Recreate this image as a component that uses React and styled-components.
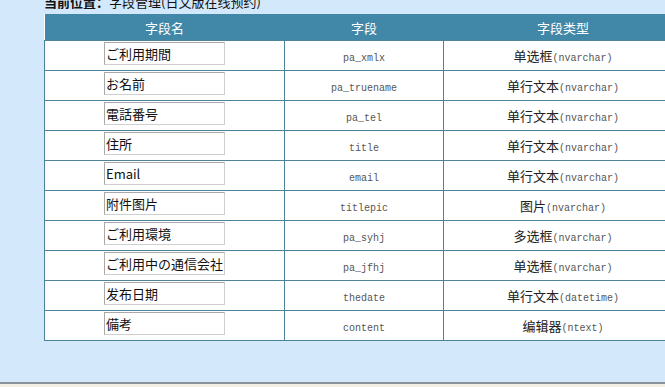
import React from "react";
import styled, { createGlobalStyle } from "styled-components";

const GlobalStyle = createGlobalStyle`
  html, body {
    margin: 0;
    padding: 0;
    background: #d3e8fb;
    overflow: hidden;
  }
`;

const fields = [
  { name: "ご利用期間", field: "pa_xmlx", type: "单选框", db: "nvarchar" },
  { name: "お名前", field: "pa_truename", type: "单行文本", db: "nvarchar" },
  { name: "電話番号", field: "pa_tel", type: "单行文本", db: "nvarchar" },
  { name: "住所", field: "title", type: "单行文本", db: "nvarchar" },
  { name: "Email", field: "email", type: "单行文本", db: "nvarchar" },
  { name: "附件图片", field: "titlepic", type: "图片", db: "nvarchar" },
  { name: "ご利用環境", field: "pa_syhj", type: "多选框", db: "nvarchar" },
  { name: "ご利用中の通信会社", field: "pa_jfhj", type: "单选框", db: "nvarchar" },
  { name: "发布日期", field: "thedate", type: "单行文本", db: "datetime" },
  { name: "備考", field: "content", type: "编辑器", db: "ntext" },
];

const Page = styled.div`
  width: 665px;
  height: 387px;
  display: flex;
  flex-direction: column;
  font-family: "Noto Sans CJK SC", "Noto Sans", sans-serif;
`;

const Main = styled.div`
  height: 382px;
  padding-left: 44px;
  box-sizing: border-box;
  overflow: hidden;
`;

const Footer = styled.div`
  flex: 1;
  border-top: 2px solid #8a9299;
  background: #f3efe4;
`;

const Crumb = styled.div`
  margin-top: -6px;
  height: 20px;
  font-size: 13px;
  line-height: 16px;
  color: #111;
  white-space: nowrap;
  b {
    font-weight: 700;
  }
`;

const Table = styled.table`
  width: 638px;
  border-collapse: collapse;
  background: #fff;
  table-layout: fixed;
`;

const Th = styled.th`
  height: 26px;
  padding: 0;
  background: #4187a8;
  color: #fff;
  font-weight: 400;
  font-size: 13px;
  text-align: center;
  width: ${(p) => p.$w}px;
`;

const Td = styled.td`
  height: 30px;
  padding: ${(p) => (p.$top ? "1px 0 0" : "0")};
  box-sizing: border-box;
  border: 1px solid #4d8298;
  text-align: center;
  vertical-align: ${(p) => (p.$top ? "top" : "middle")};
  color: #222;
  font-size: 13px;
`;

const NameInput = styled.input`
  display: block;
  margin: 0 0 0 59px;
  width: 121px;
  height: 23px;
  box-sizing: border-box;
  border: 1px solid #cfcfcf;
  border-top-color: #a9a9a9;
  border-left-color: #a9a9a9;
  padding: 0 1px;
  font-family: "Noto Sans CJK JP", "Noto Sans", sans-serif;
  font-size: 13px;
  color: #111;
  background: #fff;
  outline: none;
`;

const Mono = styled.span`
  font-family: "Liberation Mono", "DejaVu Sans Mono", monospace;
  font-size: 10px;
  color: #555;
`;

const TypeLabel = styled.span`
  font-size: 13px;
  color: #222;
`;

export default function App() {
  return (
    <Page>
      <GlobalStyle />
      <Main>
        <Crumb>
          <b>当前位置：</b>字段管理(日文版在线预约)
        </Crumb>
        <Table>
          <thead>
            <tr>
              <Th $w={240}>字段名</Th>
              <Th $w={159}>字段</Th>
              <Th $w={239}>字段类型</Th>
            </tr>
          </thead>
          <tbody>
            {fields.map((f, i) => (
              <tr key={i}>
                <Td $top>
                  <NameInput defaultValue={f.name} readOnly />
                </Td>
                <Td>
                  <Mono>{f.field}</Mono>
                </Td>
                <Td>
                  <TypeLabel>{f.type}</TypeLabel>
                  <Mono>({f.db})</Mono>
                </Td>
              </tr>
            ))}
          </tbody>
        </Table>
      </Main>
      <Footer />
    </Page>
  );
}
